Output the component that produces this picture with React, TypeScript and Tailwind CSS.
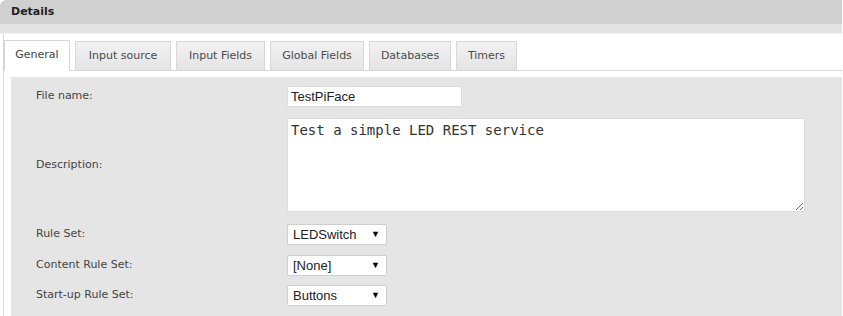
import React from 'react';

const tabs = [
  { label: 'General', width: 'w-[66px]', active: true },
  { label: 'Input source', width: 'w-[96px]', active: false },
  { label: 'Input Fields', width: 'w-[89px]', active: false },
  { label: 'Global Fields', width: 'w-[94px]', active: false },
  { label: 'Databases', width: 'w-[82px]', active: false },
  { label: 'Timers', width: 'w-[61px]', active: false },
];

const Select: React.FC<{ value: string }> = ({ value }) => (
  <div className="w-[100px] h-[21px] bg-white border border-[#cfcfcf] rounded-[2px] flex items-center justify-between pl-[5px] pr-[6px] font-['Liberation_Sans',Arial,sans-serif] text-[13px] text-[#222]">
    <span>{value}</span>
    <span className="text-[9px] text-black leading-none">▼</span>
  </div>
);

const Row: React.FC<{ label: string; className?: string; children: React.ReactNode }> = ({ label, className, children }) => (
  <div className={`flex items-center ${className ?? ''}`}>
    <div className="w-[251px] shrink-0">{label}</div>
    {children}
  </div>
);

const App: React.FC = () => {
  return (
    <div className="w-[843px] h-[316px] overflow-hidden bg-white font-['DejaVu_Sans',Verdana,sans-serif] text-[11px] text-[#444]">
      <div className="w-[842px]">
        <div className="h-[24px] bg-[#d0d0d0] rounded-tl-[6px] flex items-center px-[11px] font-bold text-[#222]">
          Details
        </div>
        <div className="h-[10px] bg-[#e4e4e4] border-b border-[#f3f3f3]" />

        <div className="ml-[3px] border-l border-[#d6d6d6] h-[300px]">
          <div className="pt-[6px] flex items-end gap-[5px] border-b border-[#d6d6d6] h-[37px]">
            {tabs.map((t) =>
              t.active ? (
                <div
                  key={t.label}
                  className={`${t.width} h-[31px] -mb-px bg-white border border-[#d6d6d6] border-b-white flex items-center justify-center text-[#444]`}
                >
                  {t.label}
                </div>
              ) : (
                <div
                  key={t.label}
                  className={`${t.width} h-[29px] bg-gradient-to-b from-[#f2f2f2] to-[#e4e4e4] border border-[#d8d8d8] border-b-0 flex items-center justify-center text-[#4a4a4a]`}
                >
                  {t.label}
                </div>
              )
            )}
          </div>

          <div className="mt-[6px] ml-[7px] bg-[#e5e5e5] h-[260px] pl-[25px] pt-[9px]">
            <Row label="File name:">
              <div className="w-[175px] h-[21px] bg-white border border-[#dcdcdc] flex items-center pl-[3px] font-['Liberation_Sans',Arial,sans-serif] text-[13px] text-[#222]">
                TestPiFace
              </div>
            </Row>
            <Row label="Description:" className="mt-[11px]">
              <textarea
                readOnly
                defaultValue="Test a simple LED REST service"
                className="w-[518px] h-[94px] bg-white border border-[#dcdcdc] px-[3px] pt-[3px] font-['DejaVu_Sans_Mono',monospace] text-[14px] leading-[17px] text-[#333] outline-none"
              />
            </Row>
            <Row label="Rule Set:" className="mt-[12px]">
              <Select value="LEDSwitch" />
            </Row>
            <Row label="Content Rule Set:" className="mt-[10px]">
              <Select value="[None]" />
            </Row>
            <Row label="Start-up Rule Set:" className="mt-[9px]">
              <Select value="Buttons" />
            </Row>
          </div>
        </div>
      </div>
    </div>
  );
};

export default App;
